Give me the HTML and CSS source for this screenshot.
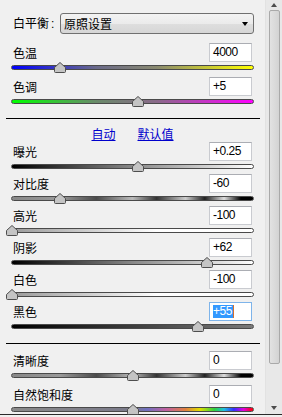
FILE: index.html
```html
<!DOCTYPE html>
<html lang="zh-CN">
<head>
    <meta charset="UTF-8">
    <title>基本</title>
    <link rel="stylesheet" href="styles.css">
</head>
<body>
    <div class="panel">
        <div class="content">
            <div class="wb-row">
                <span class="wb-label">白平衡<span class="colon">:</span></span>
                <div class="select">
                    <span>原照设置</span>
                    <span class="arrow"></span>
                </div>
            </div>

            <div class="section loose">
                <div class="control">
                    <div class="head"><span class="label">色温</span><span class="value">4000</span></div>
                    <div class="track temp"><svg class="thumb" style="left:42px" viewBox="0 0 12 11"><path d="M6 .5L11.5 5.5V9.5Q11.5 10.5 10.5 10.5H1.5Q.5 10.5 .5 9.5V5.5Z"/></svg></div>
                </div>
                <div class="control">
                    <div class="head"><span class="label">色调</span><span class="value">+5</span></div>
                    <div class="track tint"><svg class="thumb" style="left:120px" viewBox="0 0 12 11"><path d="M6 .5L11.5 5.5V9.5Q11.5 10.5 10.5 10.5H1.5Q.5 10.5 .5 9.5V5.5Z"/></svg></div>
                </div>
            </div>

            <div class="divider"></div>
            <div class="links"><a href="#">自动</a><a href="#">默认值</a></div>

            <div class="section tight">
                <div class="control">
                    <div class="head"><span class="label">曝光</span><span class="value">+0.25</span></div>
                    <div class="track exposure"><svg class="thumb" style="left:120px" viewBox="0 0 12 11"><path d="M6 .5L11.5 5.5V9.5Q11.5 10.5 10.5 10.5H1.5Q.5 10.5 .5 9.5V5.5Z"/></svg></div>
                </div>
                <div class="control">
                    <div class="head"><span class="label">对比度</span><span class="value">-60</span></div>
                    <div class="track contrast"><svg class="thumb" style="left:42px" viewBox="0 0 12 11"><path d="M6 .5L11.5 5.5V9.5Q11.5 10.5 10.5 10.5H1.5Q.5 10.5 .5 9.5V5.5Z"/></svg></div>
                </div>
                <div class="control">
                    <div class="head"><span class="label">高光</span><span class="value">-100</span></div>
                    <div class="track highlights"><svg class="thumb" style="left:-6px" viewBox="0 0 12 11"><path d="M6 .5L11.5 5.5V9.5Q11.5 10.5 10.5 10.5H1.5Q.5 10.5 .5 9.5V5.5Z"/></svg></div>
                </div>
                <div class="control">
                    <div class="head"><span class="label">阴影</span><span class="value">+62</span></div>
                    <div class="track shadows"><svg class="thumb" style="left:189px" viewBox="0 0 12 11"><path d="M6 .5L11.5 5.5V9.5Q11.5 10.5 10.5 10.5H1.5Q.5 10.5 .5 9.5V5.5Z"/></svg></div>
                </div>
                <div class="control">
                    <div class="head"><span class="label">白色</span><span class="value">-100</span></div>
                    <div class="track whites"><svg class="thumb" style="left:-6px" viewBox="0 0 12 11"><path d="M6 .5L11.5 5.5V9.5Q11.5 10.5 10.5 10.5H1.5Q.5 10.5 .5 9.5V5.5Z"/></svg></div>
                </div>
                <div class="control">
                    <div class="head"><span class="label">黑色</span><span class="value focused"><span class="selected">+55</span><span class="caret"></span></span></div>
                    <div class="track blacks"><svg class="thumb" style="left:180px" viewBox="0 0 12 11"><path d="M6 .5L11.5 5.5V9.5Q11.5 10.5 10.5 10.5H1.5Q.5 10.5 .5 9.5V5.5Z"/></svg></div>
                </div>
            </div>

            <div class="divider"></div>

            <div class="section loose">
                <div class="control">
                    <div class="head"><span class="label">清晰度</span><span class="value">0</span></div>
                    <div class="track clarity"><svg class="thumb" style="left:115px" viewBox="0 0 12 11"><path d="M6 .5L11.5 5.5V9.5Q11.5 10.5 10.5 10.5H1.5Q.5 10.5 .5 9.5V5.5Z"/></svg></div>
                </div>
                <div class="control">
                    <div class="head"><span class="label">自然饱和度</span><span class="value">0</span></div>
                    <div class="track vibrance"><svg class="thumb" style="left:115px" viewBox="0 0 12 11"><path d="M6 .5L11.5 5.5V9.5Q11.5 10.5 10.5 10.5H1.5Q.5 10.5 .5 9.5V5.5Z"/></svg></div>
                </div>
            </div>
        </div>

        <div class="scrollbar">
            <span class="arrow-up"></span>
            <div class="scroll-thumb"></div>
            <div class="scroll-rest"></div>
            <span class="arrow-down"></span>
        </div>
    </div>
</body>
</html>
```

FILE: styles.css
```css
body {
    margin: 0;
    background-color: #f0f0f0;
    font-family: "Noto Sans CJK SC", "DejaVu Sans", sans-serif;
    font-size: 12px;
    color: #000;
}

.panel {
    display: flex;
    width: 282px;
    height: 414px;
    border-bottom: 1px solid #2a2a2a;
}

.content {
    width: 265px;
    padding-top: 12px;
    box-sizing: border-box;
}

/* white balance */
.wb-row {
    display: flex;
    align-items: center;
    padding-left: 13px;
}

.wb-label {
    width: 47px;
    line-height: 21px;
}

.colon {
    font-family: "Liberation Sans", sans-serif;
    margin-left: 2px;
}

.select {
    width: 194px;
    height: 21px;
    box-sizing: border-box;
    border: 1px solid #707070;
    border-radius: 3px;
    background: linear-gradient(#f3f3f3, #ebebeb 50%, #dedede 51%, #d6d6d6);
    display: flex;
    align-items: center;
    justify-content: space-between;
    padding: 0 5px 0 3px;
    line-height: 19px;
}

.select .arrow {
    width: 0;
    height: 0;
    border-top: 4px solid #000;
    border-left: 3.5px solid transparent;
    border-right: 3.5px solid transparent;
}

/* sliders */
.section {
    display: flex;
    flex-direction: column;
    padding: 0 11px;
}

.section.loose {
    gap: 7px;
    margin-top: 8px;
}

.section.tight {
    gap: 5px;
}

.divider + .section.loose {
    margin-top: 7px;
}

.head {
    display: flex;
    align-items: center;
    justify-content: space-between;
    height: 19px;
}

.label {
    padding-left: 2px;
}

.value {
    width: 43px;
    height: 19px;
    box-sizing: border-box;
    margin-right: 2px;
    background-color: #fff;
    border: 1px solid #c9cbd0;
    border-top-color: #abadb3;
    padding-left: 3px;
    font-family: "Liberation Sans", sans-serif;
    font-size: 12px;
    letter-spacing: -0.5px;
    line-height: 17px;
}

.value.focused {
    border-color: #7eb4ea;
    display: flex;
    align-items: center;
}

.selected {
    background-color: #3399ff;
    color: #fff;
    line-height: 13px;
    padding-right: 1px;
}

.caret {
    width: 1px;
    height: 13px;
    background-color: #d6702d;
}

.track {
    position: relative;
    height: 5px;
    margin-top: 3px;
    box-sizing: border-box;
    border: 1px solid #4a4a4a;
    border-radius: 3px;
}

.thumb {
    position: absolute;
    top: -4px;
    width: 12px;
    height: 11px;
}

.thumb path {
    fill: #c4c4c4;
    stroke: #4e4e4e;
    stroke-width: 1;
}

.temp { background: linear-gradient(to right, #0000ff, #6a6a8a 35%, #8a8a70 60%, #ffff00); }
.tint { background: linear-gradient(to right, #00ff00, #6a8a6a 35%, #8a6a8a 60%, #ff00ff); }
.exposure { background: linear-gradient(to right, #000, #888 50%, #fff); }
.shadows { background: linear-gradient(to right, #000, #888 50%, #fff); }
.highlights { background: linear-gradient(to right, #9a9a9a, #fff 60%); }
.whites { background: linear-gradient(to right, #9a9a9a, #fff 60%); }
.blacks { background: linear-gradient(to right, #000, #7a7a7a); }
.contrast, .clarity {
    background: linear-gradient(to right, #888, #9a9a9a 20%, #4a4a4a 35%, #bbb 50%, #333 60%, #ccc 72%, #222 80%, #ddd 88%, #000 95%);
}
.vibrance {
    background: linear-gradient(to right, #8a8a8a, #7a7a8a 50%, #7070c0 56%, #c060a0 64%, #e08040 72%, #e0e000 78%, #30d040 84%, #20c0e0 88%, #3030ff 92%, #e000e0 96%, #ff0000);
}

.divider {
    height: 1px;
    background-color: #000;
    margin: 14px 5px 0 6px;
}

.links {
    display: flex;
    justify-content: center;
    gap: 22px;
    margin-top: 7px;
    line-height: 16px;
}

.links a {
    color: #0000cc;
}

/* scrollbar */
.scrollbar {
    width: 17px;
    box-sizing: border-box;
    border-left: 1px solid #e2e2e2;
    background-color: #e8e8e8;
    display: flex;
    flex-direction: column;
    align-items: center;
}

.arrow-up, .arrow-down {
    width: 0;
    height: 0;
    border-left: 3.5px solid transparent;
    border-right: 3.5px solid transparent;
}

.arrow-up {
    margin-top: 3px;
    border-bottom: 4px solid #4d4d4d;
}

.scroll-thumb {
    width: 11px;
    height: 354px;
    margin-top: 3px;
    box-sizing: border-box;
    border: 1px solid #a9a9a9;
    border-radius: 2px;
    background: linear-gradient(to right, #e2e2e2, #d3d3d3);
}

.scroll-rest {
    flex: 1;
}

.arrow-down {
    margin-bottom: 4px;
    border-top: 4px solid #4d4d4d;
}
```
